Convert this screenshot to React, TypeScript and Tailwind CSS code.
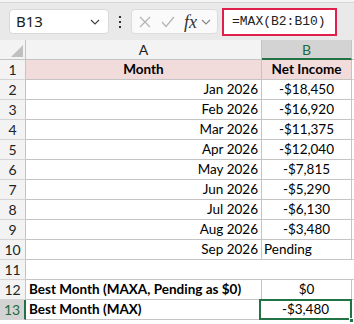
import React from "react";

const rows = [
  { n: 2, month: "Jan 2026", val: "-$18,450" },
  { n: 3, month: "Feb 2026", val: "-$16,920" },
  { n: 4, month: "Mar 2026", val: "-$11,375" },
  { n: 5, month: "Apr 2026", val: "-$12,040" },
  { n: 6, month: "May 2026", val: "-$7,815" },
  { n: 7, month: "Jun 2026", val: "-$5,290" },
  { n: 8, month: "Jul 2026", val: "-$6,130" },
  { n: 9, month: "Aug 2026", val: "-$3,480" },
];

const font = { fontFamily: "Lato, 'Open Sans', sans-serif" };

const RowNum = ({ n, active }: { n: number | string; active?: boolean }) => (
  <div
    className={`w-[26px] shrink-0 flex items-center justify-center border-b border-[#d4d4d4] text-[14px] ${
      active
        ? "bg-[#d3d3d3] text-[#1e6b40] border-r-2 border-r-[#217346]"
        : "bg-[#f3f3f3] text-[#222] border-r border-r-[#c4c4c4]"
    }`}
  >
    {n}
  </div>
);

const Chevron = ({ className }: { className?: string }) => (
  <svg width="10" height="6" viewBox="0 0 10 6" className={className}>
    <path d="M1 1 L5 5 L9 1" fill="none" stroke="currentColor" strokeWidth="1.2" />
  </svg>
);

export default function App() {
  return (
    <div className="w-[354px] h-[324px] bg-white overflow-hidden text-[13.5px]" style={font}>
      {/* toolbar */}
      <div className="h-[40px] bg-[#e9e9e9] flex flex-col">
        <div className="h-[3px] bg-[#f4f4f4] border-b border-[#d6d6d6]" />
        <div className="flex-1 flex items-center pl-[9px]">
          <div className="w-[100px] h-[25px] rounded-[4px] bg-white border border-[#d9d9d9] flex items-center justify-between pl-[6px] pr-[8px]">
            <span className="text-[15px] text-[#1a1a1a]" style={{ fontFamily: "'Noto Sans', sans-serif" }}>B13</span>
            <Chevron className="text-[#444]" />
          </div>
          <div className="w-[22px] flex flex-col items-center gap-[3px]">
            <span className="w-[2px] h-[2px] bg-[#333]" />
            <span className="w-[2px] h-[2px] bg-[#333]" />
            <span className="w-[2px] h-[2px] bg-[#333]" />
          </div>
          <div className="w-[87px] h-[25px] rounded-[4px] bg-[#fafafa] border border-[#dcdcdc] flex items-center pl-[7px]">
            <svg width="12" height="12" viewBox="0 0 12 12">
              <path d="M1 1 L11 11 M11 1 L1 11" stroke="#b3b3b3" strokeWidth="1.2" fill="none" />
            </svg>
            <svg width="14" height="12" viewBox="0 0 14 12" className="ml-[10px]">
              <path d="M1 6 L5 10.5 L13 1" stroke="#b3b3b3" strokeWidth="1.2" fill="none" />
            </svg>
            <span
              className="ml-[9px] text-[18px] italic text-[#333] leading-none"
              style={{ fontFamily: "'Liberation Serif', serif" }}
            >
              fx
            </span>
            <Chevron className="ml-[4px] text-[#888]" />
          </div>
          <div className="ml-[4px] w-[115px] h-[28px] border-2 border-[#e0204c] bg-white flex items-center pl-[8px]">
            <span className="text-[13px] text-[#222]" style={{ fontFamily: "'Liberation Mono', monospace" }}>
              =MAX(B2:B10)
            </span>
          </div>
        </div>
      </div>

      {/* column headers */}
      <div className="flex h-[20px] bg-[#f3f3f3] text-[14px]">
        <div className="w-[26px] shrink-0 border-r border-b border-[#c4c4c4] relative">
          <svg width="12" height="12" viewBox="0 0 12 12" className="absolute right-[2px] bottom-[2px]">
            <path d="M12 0 L12 12 L0 12 Z" fill="#c0c0c0" />
          </svg>
        </div>
        <div className="w-[236px] shrink-0 border-r border-b border-[#c4c4c4] flex items-center justify-center text-[#222]">
          A
        </div>
        <div className="w-[90px] shrink-0 bg-[#d3d3d3] border-r border-[#c4c4c4] border-b-2 border-b-[#217346] flex items-center justify-center text-[#1e6b40]">
          B
        </div>
        <div className="flex-1 border-b border-[#c4c4c4]" />
      </div>

      {/* row 1 */}
      <div className="flex h-[20px]">
        <RowNum n={1} />
        <div className="w-[236px] shrink-0 bg-[#f2dcdb] border-r border-b border-[#c4c4c4] flex items-center justify-center font-bold text-black">
          Month
        </div>
        <div className="w-[90px] shrink-0 bg-[#f2dcdb] border-r border-b border-[#c4c4c4] flex items-center justify-center font-bold text-black">
          Net Income
        </div>
        <div className="flex-1 border-b border-[#d4d4d4]" />
      </div>

      {rows.map((r) => (
        <div key={r.n} className="flex h-[20px]">
          <RowNum n={r.n} />
          <div className="w-[236px] shrink-0 border-r border-b border-[#c4c4c4] flex items-center justify-end pr-[3px] text-black">
            {r.month}
          </div>
          <div className="w-[90px] shrink-0 border-r border-b border-[#c4c4c4] flex items-center justify-center text-black">
            {r.val}
          </div>
          <div className="flex-1 border-b border-[#d4d4d4]" />
        </div>
      ))}

      {/* row 10 */}
      <div className="flex h-[20px]">
        <RowNum n={10} />
        <div className="w-[236px] shrink-0 border-r border-b border-[#c4c4c4] flex items-center justify-end pr-[3px] text-black">
          Sep 2026
        </div>
        <div className="w-[90px] shrink-0 border-r border-b border-[#c4c4c4] flex items-center pl-[2px] text-black">
          Pending
        </div>
        <div className="flex-1 border-b border-[#d4d4d4]" />
      </div>

      {/* row 11 */}
      <div className="flex h-[20px]">
        <RowNum n={11} />
        <div className="w-[327px] shrink-0 border-b border-[#c4c4c4]" />
        <div className="flex-1 border-b border-[#d4d4d4]" />
      </div>

      {/* row 12 */}
      <div className="flex h-[20px]">
        <RowNum n={12} />
        <div className="w-[236px] shrink-0 border-r border-b border-[#c4c4c4] flex items-center pl-[3px] font-bold text-black whitespace-nowrap">
          Best Month (MAXA, Pending as $0)
        </div>
        <div className="w-[90px] shrink-0 border-r border-b border-[#c4c4c4] flex items-center justify-center text-black">
          $0
        </div>
        <div className="flex-1 border-b border-[#d4d4d4]" />
      </div>

      {/* row 13 */}
      <div className="flex h-[20px]">
        <RowNum n={13} active />
        <div className="w-[235px] shrink-0 border-r border-b border-[#c4c4c4] flex items-center pl-[3px] font-bold text-black">
          Best Month (MAX)
        </div>
        <div className="w-[90px] shrink-0 border-r border-b border-[#c4c4c4] flex items-center justify-center text-black relative">
          -$3,480
          <div className="absolute -left-[2px] -top-[1px] -right-[2px] -bottom-[1px] border-2 border-[#217346]" />
          <div className="absolute -right-[4px] -bottom-[4px] w-[5px] h-[5px] bg-[#217346] border border-white" />
        </div>
        <div className="flex-1 border-b border-[#d4d4d4]" />
      </div>
    </div>
  );
}
